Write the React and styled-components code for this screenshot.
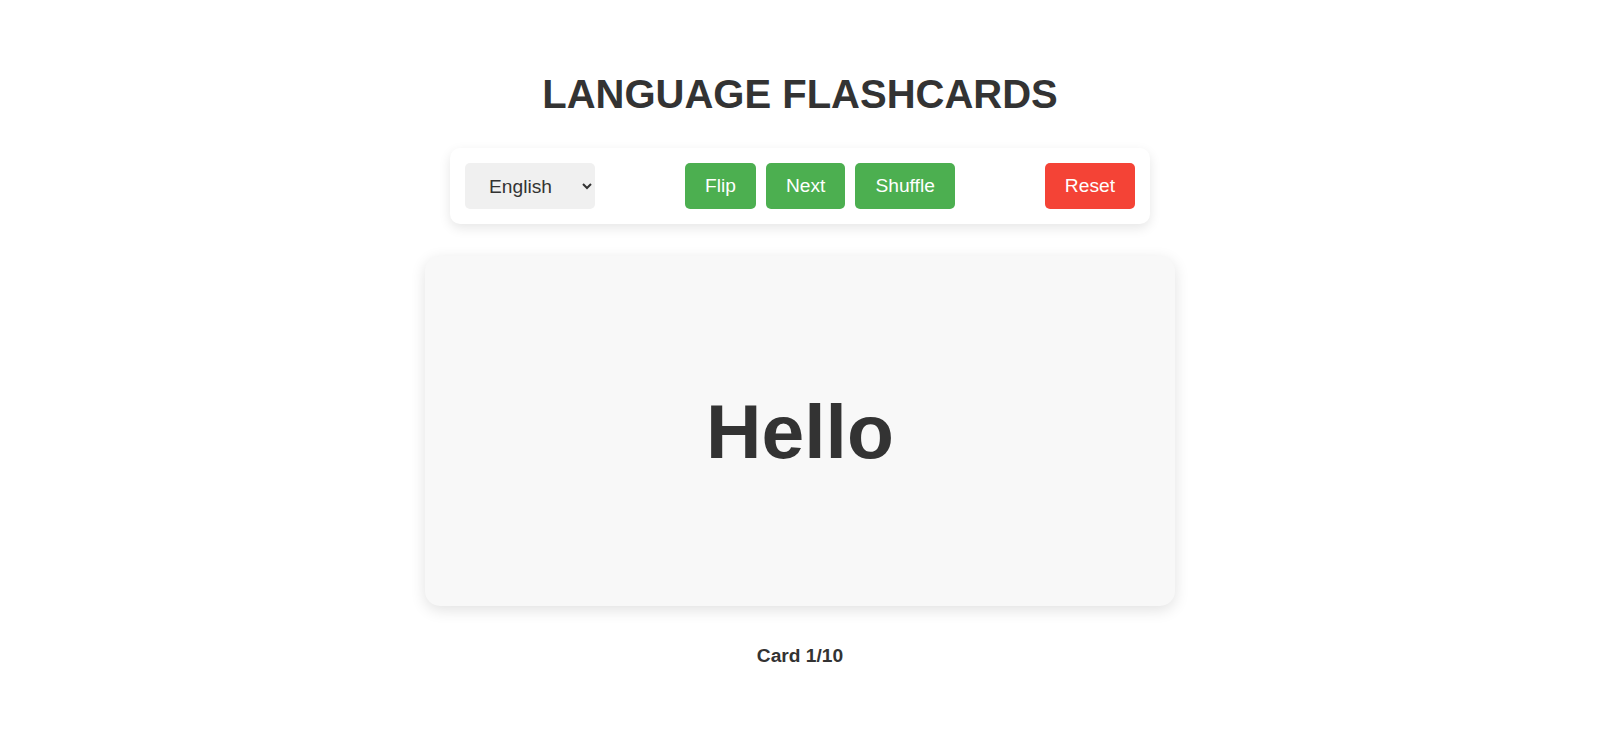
import React, { useState } from "react";
import styled, { createGlobalStyle } from "styled-components";

const GlobalStyle = createGlobalStyle`
  * {
    box-sizing: border-box;
  }
  body {
    margin: 0;
    background: #ffffff;
    font-family: "Liberation Sans", Arial, sans-serif;
    color: #333333;
  }
`;

const CARDS = [
  { en: "Hello", es: "Hola" },
  { en: "Goodbye", es: "Adiós" },
  { en: "Thank you", es: "Gracias" },
  { en: "Please", es: "Por favor" },
  { en: "Yes", es: "Sí" },
  { en: "No", es: "No" },
  { en: "Water", es: "Agua" },
  { en: "Food", es: "Comida" },
  { en: "Friend", es: "Amigo" },
  { en: "House", es: "Casa" },
];

export default function App() {
  const [language, setLanguage] = useState("en");
  const [index, setIndex] = useState(0);
  const [flipped, setFlipped] = useState(false);
  const [order, setOrder] = useState(CARDS.map((_, i) => i));

  const other = language === "en" ? "es" : "en";
  const card = CARDS[order[index]];
  const word = flipped ? card[other] : card[language];

  const onNext = () => {
    setFlipped(false);
    setIndex((index + 1) % CARDS.length);
  };

  const onShuffle = () => {
    const next = [...order].sort(() => Math.random() - 0.5);
    setOrder(next);
    setIndex(0);
    setFlipped(false);
  };

  const onReset = () => {
    setOrder(CARDS.map((_, i) => i));
    setIndex(0);
    setFlipped(false);
  };

  return (
    <>
      <GlobalStyle />
      <StyledPage>
        <StyledTitle>LANGUAGE FLASHCARDS</StyledTitle>
        <StyledToolbar>
          <StyledSelect
            value={language}
            onChange={(e) => setLanguage(e.target.value)}
          >
            <option value="en">English</option>
            <option value="es">Spanish</option>
          </StyledSelect>
          <StyledButtonGroup>
            <StyledButton onClick={() => setFlipped(!flipped)}>Flip</StyledButton>
            <StyledButton onClick={onNext}>Next</StyledButton>
            <StyledButton onClick={onShuffle}>Shuffle</StyledButton>
          </StyledButtonGroup>
          <StyledButton $danger onClick={onReset}>
            Reset
          </StyledButton>
        </StyledToolbar>
        <StyledCard onClick={() => setFlipped(!flipped)}>
          <StyledWord>{word}</StyledWord>
        </StyledCard>
        <StyledCounter>
          Card {index + 1}/{CARDS.length}
        </StyledCounter>
      </StyledPage>
    </>
  );
}

const StyledPage = styled.div`
  display: flex;
  flex-direction: column;
  align-items: center;
  justify-content: center;
  min-height: 100vh;
  padding-top: 2px;
`;
const StyledTitle = styled.h1`
  margin: 0 0 31px;
  font-size: 40px;
  font-weight: bold;
  color: #333333;
`;
const StyledToolbar = styled.div`
  display: flex;
  align-items: center;
  justify-content: space-between;
  width: 700px;
  padding: 15px;
  margin-bottom: 32px;
  background: #ffffff;
  border-radius: 10px;
  box-shadow: 0 4px 12px rgba(0, 0, 0, 0.1);
`;
const StyledSelect = styled.select`
  width: 130px;
  height: 46px;
  padding: 0 8px 0 20px;
  font-family: "Liberation Sans", Arial, sans-serif;
  font-size: 19.2px;
  color: #333333;
  background: #f0f0f0;
  border: none;
  border-radius: 5px;
  outline: none;
`;
const StyledButtonGroup = styled.div`
  display: flex;
  gap: 10px;
`;
const StyledButton = styled.button`
  padding: 12px 20px;
  font-family: "Liberation Sans", Arial, sans-serif;
  font-size: 19.2px;
  line-height: 22px;
  color: #ffffff;
  background: ${({ $danger }) => ($danger ? "#f44336" : "#4caf50")};
  border: none;
  border-radius: 5px;
  cursor: pointer;
`;
const StyledCard = styled.div`
  display: flex;
  align-items: center;
  justify-content: center;
  width: 750px;
  height: 350px;
  margin-bottom: 39px;
  background: #f8f8f8;
  border-radius: 15px;
  box-shadow: 0 4px 15px rgba(0, 0, 0, 0.12);
  cursor: pointer;
`;
const StyledWord = styled.div`
  font-size: 76.8px;
  font-weight: bold;
  color: #333333;
`;
const StyledCounter = styled.div`
  font-size: 19.2px;
  line-height: 22px;
  font-weight: bold;
  color: #333333;
`;
